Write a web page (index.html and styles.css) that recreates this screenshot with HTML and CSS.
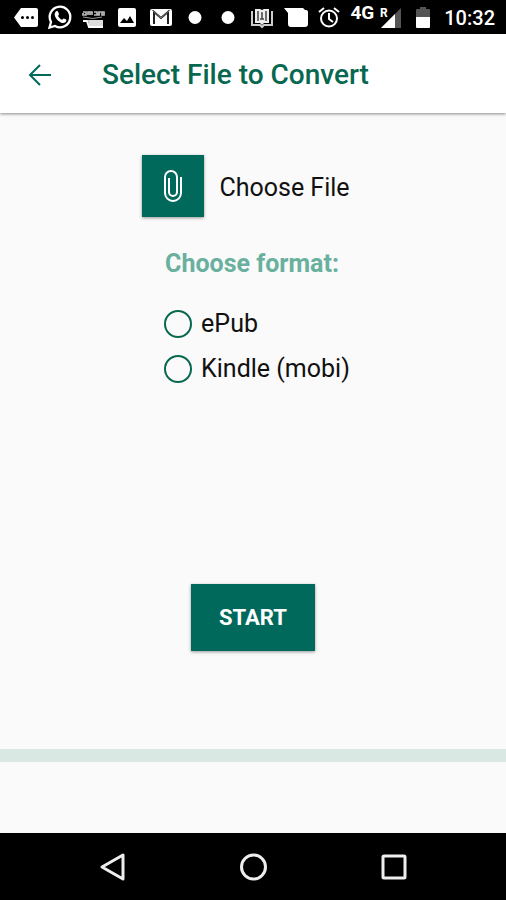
FILE: index.html
```html
<!DOCTYPE html>
<html lang="en">
<head>
<meta charset="utf-8">
<meta name="viewport" content="width=device-width, initial-scale=1">
<title>Select File to Convert</title>
<link rel="stylesheet" href="styles.css">
</head>
<body>
<div class="status">
  <div class="notices">
    <svg viewBox="0 0 26 26"><path fill="#fff" d="M8 4h15q2 0 2 2v15q0 2-2 2H8L1 13.500z"/><circle cx="9.500" cy="13.500" r="1.500"/><circle cx="14.500" cy="13.500" r="1.500"/><circle cx="19.500" cy="13.500" r="1.500"/></svg>
    <svg viewBox="0 0 26 26"><path fill="none" stroke="#fff" stroke-width="2.300" d="M2.500 23.500 4 18A10.300 10.300 0 1 1 8 22z"/><path fill="#fff" d="M9 7.500c1-.8 2-.3 2.300.7l.7 1.900c.2.700-.7 1.400-1 1.900 1 1.900 2.300 3 4.100 3.800.6-.4 1.100-1.500 1.800-1.300l2.200 1.100c.8.500-.2 2.500-1.100 3-3.700 2-10.300-4-10.300-8.200 0-1.200.5-2.200 1.300-2.900z"/></svg>
    <svg viewBox="0 0 26 26"><path fill="none" stroke="#bbb" stroke-width="1.700" d="M3 8h3v3H3V9m5 2V8h2v3m0-3h2v3m2-3h3v3h-3m4-3h2l-2 3h2m2-3h2v3h-2z"/><path fill="none" stroke="#999" d="M3 13q10 3 19 0"/><path fill="none" stroke="#fff" stroke-width="2" d="M3 17h4l2 6h14"/><path fill="#ddd" d="M8 16h15v6H9z"/></svg>
    <svg viewBox="0 0 26 26"><rect x="4" y="4" width="18" height="19" rx="2" fill="#fff"/><path d="m6 19 4-5 3 3 3-5 4 7z"/></svg>
    <svg viewBox="0 0 26 26"><rect x="2" y="5" width="22" height="17" rx="2" fill="#fff"/><path fill="none" stroke="#222" stroke-width="2" d="M6 20V8l7 6 7-6v12"/><path fill="none" stroke="#777" d="m4 6 9 8 9-8"/></svg>
    <svg viewBox="0 0 26 26"><circle cx="13" cy="13.500" r="6.500" fill="#fff"/></svg>
    <svg viewBox="0 0 26 26"><circle cx="13" cy="13.500" r="6.500" fill="#fff"/></svg>
    <svg viewBox="0 0 26 26"><path fill="none" stroke="#ccc" stroke-width="2" d="M4 8H3v13h8l2 2 2-2h8V8h-1"/><path fill="#eee" d="M6 5h5l2 1 2-1h5v14h-5l-2 2-2-2H6z"/><path fill="none" stroke="#444" stroke-width="1.500" d="M9 7v10m8-10v10M12 9h1v6m-2 0h4"/></svg>
    <svg viewBox="0 0 26 26"><path fill="#fff" d="M1 4h19l2 2h1q2 0 2 2v12q0 3-3 3H8q-3 0-3-3V9z"/></svg>
    <svg viewBox="0 0 26 26"><g fill="none" stroke="#fff" stroke-width="2"><circle cx="13" cy="14.500" r="8"/><path d="M13 9v6l4 3M3 8l5-4m15 4-5-4"/></g></svg>
  </div>
  <span class="network">4G</span>
  <svg class="signal" viewBox="0 0 22 26"><path fill="#555" d="M21 4v20H1z"/><path fill="#fff" d="M15 10v14H1z"/><text x="0" y="13" class="roaming">R</text></svg>
  <svg class="battery" viewBox="0 0 14 26"><path fill="#555" d="M4 3h6v2h3q1 0 1 1v8H0V6q0-1 1-1h3z"/><path fill="#fff" d="M0 13h14v10q0 1-1 1H1q-1 0-1-1z"/></svg>
  <time class="clock">10:32</time>
</div>
<header class="appbar">
  <button class="back" type="button" aria-label="Back"><svg viewBox="0 0 24 24"><path d="M23 12H3M12 2 2 12l10 10"/></svg></button>
  <h1>Select File to Convert</h1>
</header>
<main>
  <div class="file">
    <button class="attach" id="attach" type="button" aria-label="Attach"><svg viewBox="0 0 20 34"><path d="M18 8v16a8 8 0 0 1-16 0V8a6 6 0 0 1 12 0v15a4 4 0 0 1-8 0V9"/></svg></button>
    <label for="attach">Choose File</label>
  </div>
  <fieldset>
    <legend>Choose format:</legend>
    <label class="option"><input type="radio" name="format">ePub</label>
    <label class="option"><input type="radio" name="format">Kindle (mobi)</label>
  </fieldset>
  <button class="start" type="button">START</button>
</main>
<div class="strip"></div>
<nav>
  <button type="button" aria-label="Back"><svg viewBox="0 0 30 30"><path d="M26 3v24L5 15z"/></svg></button>
  <button type="button" aria-label="Home"><svg viewBox="0 0 30 30"><circle cx="15.500" cy="15" r="12"/></svg></button>
  <button type="button" aria-label="Recent"><svg viewBox="0 0 30 30"><rect x="4" y="4" width="22" height="22" rx="1"/></svg></button>
</nav>
</body>
</html>
```
FILE: styles.css
```css
* { box-sizing: border-box; }
body {
  margin: 0;
  min-height: 100vh;
  display: flex;
  flex-direction: column;
  background: #fafafa;
  color: #111;
  font-family: Roboto, sans-serif;
}
button {
  border: 0;
  padding: 0;
  background: none;
  font: inherit;
}
svg { display: block; }

.status {
  height: 34px;
  padding: 0 11px 0 13px;
  display: flex;
  align-items: center;
  background: #000;
  color: #fff;
}
.notices {
  flex: 1;
  display: flex;
  justify-content: space-between;
}
.notices svg { width: 26px; height: 26px; }
.network {
  margin: 0 6px 8px 8px;
  font-size: 19px;
  line-height: 20px;
  font-weight: 700;
}
.signal { width: 22px; height: 26px; margin-right: 14px; }
.roaming { fill: #fff; font-size: 12px; font-weight: 700; }
.battery { width: 14px; height: 26px; margin-right: 14px; }
.clock { font-size: 20px; line-height: 24px; font-weight: 500; padding-top: 2px; }

.appbar {
  height: 79px;
  padding: 2px 0 0 28px;
  display: flex;
  align-items: center;
  gap: 50px;
  background: #fff;
  box-shadow: 0 1px 3px rgba(0, 0, 0, .45);
}
.back svg {
  width: 24px;
  height: 24px;
  fill: none;
  stroke: #00695c;
  stroke-width: 2;
}
h1 {
  margin: 0;
  color: #08674f;
  font-size: 28px;
  line-height: 36px;
  font-weight: 500;
}

main {
  flex: 1;
  padding-top: 42px;
  display: flex;
  flex-direction: column;
  align-items: center;
  font-size: 25px;
}
.file {
  display: flex;
  align-items: center;
  gap: 15px;
  margin-right: 14px;
}
.file label { padding-top: 2px; }
.attach, .start {
  display: grid;
  place-items: center;
  background: #00695c;
  color: #fff;
  box-shadow: 0 1px 3px rgba(0, 0, 0, .4);
}
.attach { width: 62px; height: 62px; }
.attach svg {
  width: 20px;
  height: 34px;
  fill: none;
  stroke: #fff;
  stroke-width: 2;
}
fieldset {
  border: 0;
  margin: 31px 0 0 8px;
  padding: 0;
  min-width: 0;
}
legend {
  padding: 0 1px;
  margin-bottom: 21px;
  color: #69b09e;
  font-size: 25px;
  line-height: 32px;
  font-weight: 700;
}
.option {
  display: flex;
  align-items: center;
  gap: 9px;
  height: 45px;
}
.option input {
  appearance: none;
  width: 28px;
  height: 28px;
  margin: 0;
  border: 2px solid #08674f;
  border-radius: 50%;
}
.option input:checked { background: radial-gradient(#08674f 45%, transparent 50%); }
.start {
  width: 124px;
  height: 67px;
  margin-top: 193px;
  font-size: 22px;
  font-weight: 700;
}
.strip {
  height: 13px;
  margin-bottom: 71px;
  background: #dae8e3;
}
nav {
  height: 67px;
  padding: 0 42px;
  display: grid;
  grid-template-columns: repeat(3, 1fr);
  place-items: center;
  background: #000;
}
nav svg {
  width: 30px;
  height: 30px;
  fill: none;
  stroke: #eee;
  stroke-width: 3;
  stroke-linejoin: round;
}
```
